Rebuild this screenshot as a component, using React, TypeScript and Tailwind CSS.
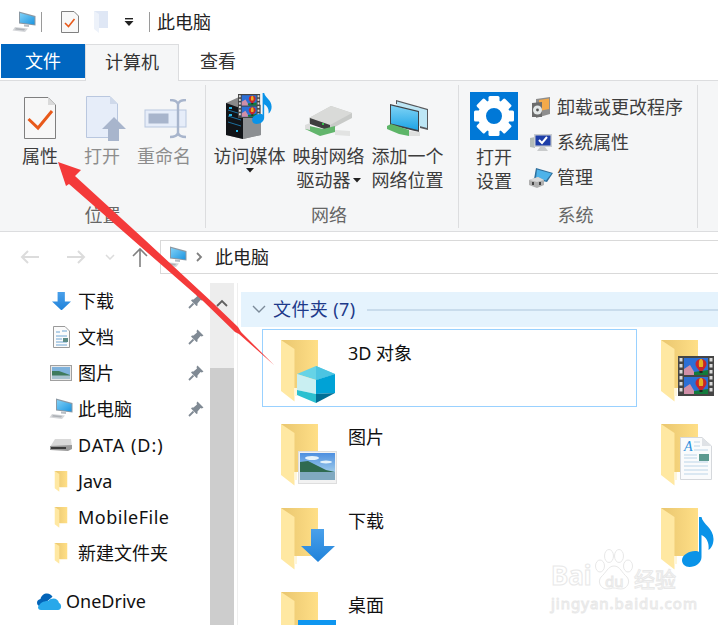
import React from "react";

const PcIcon = ({ w = 24 }: { w?: number }) => (
  <svg width={w} height={w * 0.92} viewBox="0 0 24 22" className="shrink-0">
    <defs>
      <linearGradient id="pcg" x1="0" y1="0" x2="1" y2="1">
        <stop offset="0" stopColor="#7fd0f7" />
        <stop offset="1" stopColor="#1d95e0" />
      </linearGradient>
    </defs>
    <polygon points="7,0.5 23.5,5 23.5,14.5 7,12.5" fill="#8b98a3" />
    <polygon points="8,2 22.5,6 22.5,13.5 8,11.5" fill="url(#pcg)" />
    <polygon points="12,13.5 17,14 17,16 12,15.5" fill="#b9bec4" />
    <polygon points="3,16 16,17.5 13,21 0.5,19.5" fill="#d4d6d9" />
    <polygon points="4,17 13,18 12,19.5 3,18.5" fill="#aeb2b7" />
  </svg>
);

const Folder = ({ w = 37, h = 62 }: { w?: number; h?: number }) => (
  <svg width={w} height={h} viewBox="0 0 37 62" className="shrink-0">
    <defs>
      <linearGradient id="fback" x1="0" y1="0" x2="1" y2="0">
        <stop offset="0" stopColor="#e9c66f" />
        <stop offset="1" stopColor="#ffdf87" />
      </linearGradient>
    </defs>
    <polygon points="0,0 37,0 37,48 10,48" fill="url(#fback)" />
    <polygon points="0,0 13.5,9 13.5,61.5 0,51" fill="#ffe8a2" />
    <polygon points="13.5,48 16,48 16,56 13.5,56" fill="#fff6da" />
  </svg>
);

const Cube = () => (
  <svg width="39" height="38" viewBox="0 0 39 38">
    <polygon points="19,0 38,8 19,14 0,8" fill="#66d3e6" />
    <polygon points="19,0 38,8 19,14" fill="#4cc4e2" />
    <polygon points="0,8 19,14 19,28 0,24" fill="#c9eff2" />
    <polygon points="38,8 38,27 19,28 19,14" fill="#00a2d6" />
    <polygon points="0,24 19,28 19,37 0,29" fill="#2bc0d0" />
    <polygon points="19,28 38,27 19,37" fill="#006f95" />
  </svg>
);

const PhotoBadge = () => (
  <svg width="39" height="33" viewBox="0 0 39 33">
    <defs>
      <linearGradient id="sky" x1="0" y1="0" x2="0" y2="1">
        <stop offset="0" stopColor="#4d8fe0" />
        <stop offset="1" stopColor="#bfe3ee" />
      </linearGradient>
    </defs>
    <rect x="0.5" y="0.5" width="38" height="32" fill="#f2f2f2" stroke="#dedede" />
    <rect x="2" y="2" width="35" height="27" fill="url(#sky)" />
    <ellipse cx="14" cy="7" rx="7" ry="2" fill="#e6f3fa" />
    <ellipse cx="28" cy="11" rx="6" ry="1.500" fill="#e6f3fa" />
    <polygon points="2,11 10,10 20,15 28,19 37,21 37,22 2,22" fill="#2f6a50" />
    <rect x="2" y="21" width="35" height="8" fill="#80a9c0" />
  </svg>
);

const DownArrow = ({ w = 34 }: { w?: number }) => (
  <svg width={w} height={w * 0.97} viewBox="0 0 34 33">
    <defs>
      <linearGradient id="dl" x1="0" y1="0" x2="0" y2="1">
        <stop offset="0" stopColor="#4aa0ea" />
        <stop offset="1" stopColor="#1f82da" />
      </linearGradient>
    </defs>
    <polygon points="10,0 23,0 23,17 34,17 17,33 0,17 10,17" fill="url(#dl)" />
  </svg>
);

const DesktopBadge = () => <div className="w-[38px] h-[20px] bg-[#0f96f0]" />;

const Film = () => (
  <svg width="36" height="40" viewBox="0 0 36 40">
    <rect width="36" height="40" fill="#454545" />
    {[2, 8, 14, 20, 26, 32].map((y) => (
      <g key={y}>
        <rect x="1.5" y={y} width="3" height="3.5" fill="#d9d9d9" />
        <rect x="31.5" y={y} width="3" height="3.5" fill="#d9d9d9" />
      </g>
    ))}
    {[2, 21].map((y) => (
      <g key={y}>
        <rect x="6" y={y} width="24" height="17" fill="#2c6fd6" />
        <polygon points={`6,${y + 11} 12,${y + 7} 18,${y + 17} 6,${y + 17}`} fill="#d08fa8" />
        <polygon points={`16,${y + 14} 30,${y + 12} 30,${y + 17} 16,${y + 17}`} fill="#137a3c" />
        <ellipse cx="23" cy={y + 6} rx="5.500" ry="5" fill="#c8262a" />
        <ellipse cx="23" cy={y + 6} rx="2.200" ry="5" fill="#e8b020" />
        <polygon points={`18.500,${y + 9} 27.500,${y + 9} 24.500,${y + 13} 21.500,${y + 13}`} fill="#c8262a" />
        <rect x="21.500" y={y + 13} width="3" height="2" fill="#222" />
      </g>
    ))}
  </svg>
);

const Note = ({ w = 32, h = 50 }: { w?: number; h?: number }) => (
  <svg width={w} height={h} viewBox="0 0 32 50">
    <path
      d="M17 0h2.500c1 7 12 11 12 22 0 5-2 9-5 11 1-7-2-13-7-15V40c0 6-6 10-12 10C3 50 0 47 0 43c0-5 7-9 13-9 2 0 3 0 4 1z"
      fill="#0a93e8"
    />
  </svg>
);

const DocBadge = () => (
  <svg width="32" height="43" viewBox="0 0 32 43">
    <polygon points="0.5,0.5 22,0.5 31.5,9 31.5,42.5 0.5,42.5" fill="#fafbfc" stroke="#d5d8dc" />
    <polygon points="22,0.5 31.500,9 22,9" fill="#dfe2e6" />
    <text x="4" y="14" fontSize="14" fontStyle="italic" fontFamily="Liberation Serif" fill="#2b8fdc">
      A
    </text>
    <path d="M14 5h6M14 9h6M14 13h14M4 18h13M4 21h13M4 25h24M4 29h24M4 33h24M4 37h24" stroke="#bcd5e8" strokeWidth="1" />
    <rect x="19" y="17" width="10" height="7" fill="#5d9a90" />
  </svg>
);

const Check = () => (
  <svg width="18" height="22" viewBox="0 0 18 22">
    <path d="M.5.5H13L17.5 5V21.5H.5z" fill="#f8f8f8" stroke="#808080" />
    <path d="M4 12l3.500 3.500L13.500 8" fill="none" stroke="#e8591a" strokeWidth="1.600" />
  </svg>
);

const BigCheck = () => (
  <svg width="32" height="42" viewBox="0 0 32 42">
    <path d="M.5.5H24L31.5 8V41.5H.5z" fill="#f7f7f7" stroke="#7f7f7f" />
    <path d="M24 .5V8H31.5z" fill="#dadada" />
    <path d="M4.500 22l9.500 9L28 14" fill="none" stroke="#e8591a" strokeWidth="3" />
  </svg>
);

const OpenIcon = () => (
  <svg width="42" height="46" viewBox="0 0 42 46">
    <path d="M.5.5H24L31.5 8V41.5H.5z" fill="#e6edf9" stroke="#b9c7df" />
    <path d="M24 .5V8H31.5z" fill="#cfd9ea" />
    <polygon points="28,21 40,33 33,33 33,45 22,45 22,33 16,33" fill="#a8b5cc" />
  </svg>
);

const RenameIcon = () => (
  <svg width="44" height="40" viewBox="0 0 44 40">
    <rect x="1" y="11" width="41" height="17" fill="#e6edf9" stroke="#b9c7df" />
    <rect x="4.500" y="14.500" width="20" height="10" fill="#a8b5cc" />
    <path d="M26 1c4 0 7 1 8 4v29c-1 3-4 4-8 4M42 1c-4 0-7 1-8 4M42 38c-4 0-7-1-8-4" fill="none" stroke="#a8b5cc" strokeWidth="2.400" />
  </svg>
);

const MediaIcon = () => (
  <div className="relative w-[48px] h-[46px]">
    <svg width="36" height="46" viewBox="0 0 36 46" className="absolute left-0 top-[2px]">
      <polygon points="0,8 13,2 35,10 35,40 17,44 0,40" fill="#8a8a8a" />
      <polygon points="0,8 17,14 17,44 0,40" fill="#111418" />
      <polygon points="17,14 35,10 35,40 17,44" fill="#8c8f92" />
      <path d="M2 15l13 4M2 21l13 4M2 27l13 4" stroke="#1d6f9e" />
      <rect x="3" y="12" width="3" height="2" fill="#27b6e8" />
      <rect x="3" y="19" width="3" height="2" fill="#27b6e8" />
      <rect x="10" y="35" width="2" height="2" fill="#27b6e8" />
    </svg>
    <div className="absolute left-[12px] top-[1px] scale-x-[0.62] scale-y-[0.6] origin-top-left">
      <Film />
    </div>
    <div className="absolute left-[26px] top-0">
      <Note w={20} h={31} />
    </div>
  </div>
);

const DriveIcon = () => (
  <svg width="48" height="32" viewBox="0 0 48 32">
    <polygon points="4,14 26,2 47,9 47,14 24,26 4,19" fill="#c8cac8" />
    <polygon points="4,14 25,21 47,9 26,2" fill="#d9dad8" />
    <polygon points="5,14 25,21 25,27 5,20" fill="#3e3f3f" />
    <rect x="17" y="19" width="2" height="2" fill="#35c24c" />
    <polygon points="0,21 18,25 30,22 30,28 15,32 0,25" fill="#62b56c" />
    <polygon points="30,26 45,27 45,32 30,31" fill="#e2e3e2" />
    <polygon points="0,21 5,19 5,26 0,25" fill="#dcdddc" />
  </svg>
);

const AddNetIcon = () => (
  <svg width="42" height="36" viewBox="0 0 42 36">
    <defs>
      <linearGradient id="scr" x1="0" y1="0" x2="0" y2="1">
        <stop offset="0" stopColor="#7fd3f5" />
        <stop offset="1" stopColor="#1ea4e6" />
      </linearGradient>
    </defs>
    <polygon points="9,0 41,9 41,30 33,28 33,8 9,4" fill="#58595c" />
    <polygon points="10,1.500 40,10 40,28 10,20" fill="#bde6f5" />
    <polygon points="3,4 32,11 32,32 3,25" fill="#3f4246" />
    <polygon points="4,5.500 31,12 31,30 4,23.500" fill="url(#scr)" />
    <polygon points="0,26 4,24 22,30 22,36 12,34 0,29" fill="#5db568" />
    <polygon points="22,31 33,32 33,36 22,36" fill="#dedfde" />
  </svg>
);

const Gear = () => (
  <svg width="48" height="48" viewBox="0 0 48 48" className="bg-[#0078d7]">
    {[0, 45, 90, 135, 180, 225, 270, 315].map((a) => (
      <rect key={a} x="18.500" y="4" width="11" height="10" rx="1.500" fill="#fff" transform={`rotate(${a} 24 24)`} />
    ))}
    <circle cx="24" cy="24" r="12" fill="none" stroke="#fff" strokeWidth="8" />
  </svg>
);

const UninstallIcon = () => (
  <svg width="20" height="21" viewBox="0 0 20 21">
    <polygon points="5,2 19,0 19,17 5,21" fill="#8e8e8e" />
    <polygon points="8,3 18,1.500 18,12 8,14" fill="#f2a94a" />
    <polygon points="1,6 11,5 11,20 1,20" fill="#6c6c6c" />
    <circle cx="6.500" cy="13" r="4.500" fill="#e4e8e8" />
    <circle cx="6.500" cy="13" r="1.400" fill="#555" />
  </svg>
);

const SysPropIcon = () => (
  <svg width="22" height="20" viewBox="0 0 22 20">
    <polygon points="0,5 5,4 5,15 0,14" fill="#b4bcb8" />
    <rect x="4" y="1" width="18" height="13" fill="#c8ccd0" />
    <rect x="5.500" y="2.500" width="15" height="10" fill="#1e3ea8" />
    <path d="M9 7l3 3 5-6" fill="none" stroke="#fff" strokeWidth="2" />
    <polygon points="10,14 15,14 18,18 7,18" fill="#c9cbcc" />
  </svg>
);

const ManageIcon = () => (
  <svg width="24" height="21" viewBox="0 0 24 21">
    <polygon points="7,1 24,6 18,15 5,12" fill="#2f6f9c" />
    <polygon points="8,2.500 22.500,6.500 17,13.500 7,11" fill="#4db3ea" />
    <polygon points="0,13 9,10 15,13 15,18 8,21 0,18" fill="#b0b0b0" />
    <polygon points="0,13 9,10 15,13 8,15" fill="#d9d9d9" />
    <rect x="3" y="15" width="2" height="3" fill="#444" />
    <rect x="10" y="15" width="2" height="3" fill="#444" />
  </svg>
);

const Caret = () => (
  <svg width="8" height="5" viewBox="0 0 8 5" className="block">
    <polygon points="0,0 8,0 4,4.500" fill="#222" />
  </svg>
);

const Pin = () => (
  <svg width="16" height="16" viewBox="0 0 16 16" className="shrink-0">
    <path d="M9.500 0.500L15.500 6.500 13.800 7.600 12.500 7 9.500 10.500 9.500 12.500 8.500 13 3 7.500 4 6.500 5.500 6.500 9 3.500 8.500 2z" fill="#808a94" />
    <path d="M5.500 10.500L1 15" stroke="#808a94" strokeWidth="1.800" />
  </svg>
);

const RibbonBtn = ({ w, icon, lines, dim, h = "h-[54px]" }: { w: string; icon: React.ReactNode; lines: React.ReactNode[]; dim?: boolean; h?: string }) => (
  <div className={`${w} flex flex-col items-center shrink-0`}>
    <div className={`${h} w-full flex items-end justify-center`}>{icon}</div>
    <div className={`mt-[5px] flex flex-col items-center text-[18px] leading-[24px] whitespace-nowrap ${dim ? "text-[#8d8d8d]" : "text-[#3d3d3d]"}`}>
      {lines.map((l, i) => (
        <div key={i} className="flex items-center">
          {l}
        </div>
      ))}
    </div>
  </div>
);

const Group = ({ w, label, children, pl, labelClass }: { w: string; label: string; children: React.ReactNode; pl: string; labelClass?: string }) => (
  <div className={`${w} shrink-0 h-[143px] border-r border-[#dcdddf] flex flex-col`}>
    <div className={`flex ${pl} flex-1 min-h-0`}>{children}</div>
    <div className={`h-[24px] mb-[1px] text-center text-[18px] leading-[24px] text-[#666] ${labelClass ?? ""}`}>{label}</div>
  </div>
);

const SideRow = ({ icon, text, pin, textClass }: { icon: React.ReactNode; text: string; pin?: boolean; textClass?: string }) => (
  <div className="h-[36px] flex items-center pl-[49px] pr-[6px]">
    <div className="w-[24px] flex justify-center shrink-0">{icon}</div>
    <span className={`ml-[5px] flex-1 text-[18px] text-[#111] whitespace-nowrap ${textClass ?? ""}`}>{text}</span>
    {pin && <Pin />}
  </div>
);

const FileItem = ({ badge, name, selected, badgeClass }: { badge: React.ReactNode; name?: string; selected?: boolean; badgeClass: string }) => (
  <div className={`h-[78px] flex items-start pl-[18px] ${selected ? "border border-[#99d1ff]" : "border border-transparent"}`}>
    <div className="relative w-[55px] h-[62px] mt-[10px] shrink-0">
      <Folder />
      <div className={`absolute ${badgeClass}`}>{badge}</div>
    </div>
    {name && <div className="ml-[12px] mt-[9px] text-[18px] leading-[28px] text-[#111]">{name}</div>}
  </div>
);

export default function App() {
  return (
    <div
      className="relative w-[718px] h-[625px] overflow-hidden bg-white"
      style={{ fontFamily: '"Noto Sans", "Noto Sans CJK SC", sans-serif' }}
    >
      {/* title bar */}
      <div className="h-[44px] flex items-center pl-[12px]">
        <PcIcon />
        <div className="w-px h-[20px] bg-[#9a9a9a] ml-[5px]" />
        <div className="ml-[19px]">
          <Check />
        </div>
        <svg width="15" height="22" viewBox="0 0 15 22" className="ml-[15px]">
          <polygon points="0,0 14,0 14,17 4,17" fill="#dfe7f5" />
          <polygon points="0,0 5,3 5,22 0,18" fill="#edf2fa" />
        </svg>
        <svg width="10" height="9" viewBox="0 0 10 9" className="ml-[15px]">
          <rect x="1" y="0" width="8" height="1.400" fill="#222" />
          <polygon points="0.500,3 9.500,3 5,8" fill="#222" />
        </svg>
        <div className="w-px h-[20px] bg-[#9a9a9a] ml-[15px]" />
        <span className="ml-[7px] text-[18px] text-[#222]">此电脑</span>
      </div>

      {/* tabs */}
      <div className="h-[37px] flex pl-[1px] border-b border-[#dcdddf] relative">
        <div className="w-[84px] h-[34px] bg-[#0066c0] text-white text-[18px] leading-[34px] text-center">文件</div>
        <div className="w-[94px] h-[37px] bg-[#f5f6f7] border-x border-t border-[#dcdddf] text-[18px] leading-[34px] text-center text-[#333] z-10">
          计算机
        </div>
        <div className="ml-[21px] text-[18px] leading-[34px] text-[#333]">查看</div>
      </div>

      {/* ribbon */}
      <div className="h-[151px] bg-[#f5f6f7] border-b border-[#dcdddf] flex pt-[4px]">
        <Group w="w-[206px]" pl="pl-[9px]" label="位置">
          <RibbonBtn w="w-[62px]" icon={<BigCheck />} lines={["属性"]} />
          <RibbonBtn w="w-[62px]" icon={<div className="pl-[10px] -mb-[3px]"><OpenIcon /></div>} lines={["打开"]} dim />
          <RibbonBtn w="w-[62px]" icon={<div className="pl-[3px]"><RenameIcon /></div>} lines={["重命名"]} dim />
        </Group>
        <Group w="w-[253px]" pl="pl-[4px]" label="网络" labelClass="pr-[6px]">
          <RibbonBtn w="w-[79px]" icon={<MediaIcon />} lines={["访问媒体", <Caret />]} />
          <RibbonBtn
            w="w-[79px]"
            icon={<div className="mb-[3px]"><DriveIcon /></div>}
            lines={["映射网络", <>驱动器<span className="ml-[2px]"><Caret /></span></>]}
          />
          <RibbonBtn w="w-[79px]" icon={<div className="mb-[3px]"><AddNetIcon /></div>} lines={["添加一个", "网络位置"]} />
        </Group>
        <Group w="w-[239px]" pl="pl-[11px]" label="系统" labelClass="pr-[5px]">
          <RibbonBtn w="w-[48px]" icon={<Gear />} lines={["打开", "设置"]} h="h-[55px]" />
          <div className="ml-[11px] mt-[5px] flex flex-col text-[18px] text-[#3d3d3d]">
            {[
              [<UninstallIcon />, "卸载或更改程序"],
              [<SysPropIcon />, "系统属性"],
              [<ManageIcon />, "管理"],
            ].map(([ic, t], i) => (
              <div key={i} className="h-[35px] flex items-center whitespace-nowrap">
                <div className="w-[24px] flex justify-center shrink-0">{ic}</div>
                <span className="ml-[4px]">{t}</span>
              </div>
            ))}
          </div>
        </Group>
      </div>

      {/* address row */}
      <div className="mt-[8px] h-[34px] flex items-center">
        <div className="w-[160px] h-full flex items-center pl-[20px] shrink-0">
          <svg width="20" height="16" viewBox="0 0 20 16"><path d="M19 8H2M8 2L2 8l6 6" fill="none" stroke="#dcdcdc" strokeWidth="2" /></svg>
          <svg width="20" height="16" viewBox="0 0 20 16" className="ml-[26px]"><path d="M1 8h17M12 2l6 6-6 6" fill="none" stroke="#dcdcdc" strokeWidth="2" /></svg>
          <svg width="10" height="6" viewBox="0 0 10 6" className="ml-[19px]"><path d="M1 1l4 4 4-4" fill="none" stroke="#dcdcdc" strokeWidth="1.500" /></svg>
          <svg width="16" height="20" viewBox="0 0 16 20" className="ml-[17px]"><path d="M8 20V2M1 9l7-7 7 7" fill="none" stroke="#808080" strokeWidth="1.600" /></svg>
        </div>
        <div className="flex-1 h-full border border-r-0 border-[#d9d9d9] flex items-center pl-[2px]">
          <PcIcon />
          <svg width="8" height="10" viewBox="0 0 8 10" className="ml-[8px]"><path d="M2 1l4 4-4 4" fill="none" stroke="#808080" strokeWidth="1.800" /></svg>
          <span className="ml-[12px] text-[18px] text-[#222]">此电脑</span>
        </div>
      </div>

      {/* body */}
      <div className="mt-[9px] flex h-[400px]">
        <div className="w-[210px] shrink-0 overflow-hidden">
          <SideRow icon={<DownArrow w={19} />} text="下载" pin />
          <SideRow
            icon={
              <svg width="17" height="22" viewBox="0 0 17 22">
                <path d="M.5.5H12L16.500 5V21.500H.5z" fill="#fbfbfb" stroke="#9a9a9a" />
                <path d="M3 6h4M9 5h5M3 10h11M3 13h6M3 16h11M3 19h11" stroke="#6fa6d4" />
                <rect x="10" y="12" width="5" height="4" fill="#5d8b85" />
              </svg>
            }
            text="文档"
            pin
          />
          <SideRow
            icon={
              <svg width="22" height="16" viewBox="0 0 22 16">
                <rect x=".5" y=".5" width="21" height="15" fill="#e8e8e8" stroke="#a0a0a0" />
                <rect x="2" y="2" width="18" height="12" fill="#7fb2dc" />
                <polygon points="2,6 9,6 20,10 20,11 2,11" fill="#3f7a5c" />
                <rect x="2" y="10.500" width="18" height="3.500" fill="#a8c2cf" />
              </svg>
            }
            text="图片"
            pin
          />
          <SideRow icon={<PcIcon />} text="此电脑" pin />
          <SideRow
            icon={
              <svg width="22" height="12" viewBox="0 0 22 12">
                <polygon points="5,0 21,0 22,8 0,8" fill="#d9d9d9" />
                <polygon points="0,7 22,6 22,10 18,12 0,11" fill="#9a9a9a" />
                <rect x="1" y="8" width="15" height="2" fill="#3a3a3a" />
              </svg>
            }
            text="DATA (D:)"
            textClass="tracking-[1px]"
          />
          <SideRow icon={<Folder w={14} h={21} />} text="Java" />
          <SideRow icon={<Folder w={14} h={21} />} text="MobileFile" textClass="tracking-[0.5px]" />
          <SideRow icon={<Folder w={14} h={21} />} text="新建文件夹" />
          <div className="mt-[12px] h-[36px] flex items-center pl-[37px]">
            <svg width="25" height="17" viewBox="0 0 25 17">
              <path d="M4 15.500C1.500 15.500 0 13.800 0 11.800c0-2 1.500-3.500 3.500-3.700C4.200 4.500 7 2.500 10 2.500c2.500 0 4.500 1.300 5.500 3.300" fill="#0364b8" transform="translate(0 -2)" />
              <path d="M4 17c-2 0-3-1-3-3 2-4 5-6 10-6 4-4 10-3 11 2 3 1 3 7-1 7z" fill="#28a8ea" />
            </svg>
            <span className="ml-[4px] text-[18px] text-[#111]">OneDrive</span>
          </div>
        </div>

        {/* scrollbar */}
        <div className="w-[24px] shrink-0 bg-[#ededed] flex flex-col">
          <div className="h-[85px] shrink-0 flex justify-center pt-[16px]">
            <svg width="12" height="8" viewBox="0 0 12 8"><path d="M1 7l5-5 5 5" fill="none" stroke="#606060" strokeWidth="1.800" /></svg>
          </div>
          <div className="flex-1 bg-[#cdcdcd]" />
        </div>
        <div className="w-[3px] shrink-0" />
        <div className="w-px shrink-0 bg-[#efefef]" />

        {/* main */}
        <div className="flex-1 min-w-0 overflow-hidden pt-[9px] pl-[3px]">
          <div className="h-[35px] bg-[#e5f3fd] flex items-center pl-[11px]">
            <svg width="14" height="9" viewBox="0 0 14 9"><path d="M1 1l6 6 6-6" fill="none" stroke="#7b8a99" strokeWidth="1.400" /></svg>
            <span className="ml-[7px] text-[18px] text-[#1e3a8a] whitespace-nowrap tracking-[0.4px]">文件夹 (7)</span>
            <div className="ml-[11px] flex-1 h-[2px] bg-[#c9dcec]" />
          </div>
          <div className="mt-[2px] ml-[21px] grid grid-cols-[375px_76px] gap-x-[5px] gap-y-[6px]">
            <FileItem selected name="3D 对象" badge={<Cube />} badgeClass="left-[16px] top-[26px]" />
            <FileItem badge={<Film />} badgeClass="left-[17px] top-[16px]" />
            <FileItem name="图片" badge={<PhotoBadge />} badgeClass="left-[17px] top-[27px]" />
            <FileItem badge={<DocBadge />} badgeClass="left-[19px] top-[13px]" />
            <FileItem name="下载" badge={<DownArrow />} badgeClass="left-[20px] top-[21px]" />
            <FileItem badge={<Note />} badgeClass="left-[21px] top-[9px]" />
            <FileItem name="桌面" badge={<DesktopBadge />} badgeClass="left-[17px] top-[28px]" />
          </div>
        </div>
      </div>

      {/* watermark */}
      <div className="absolute left-[551px] top-[549px] w-[130px] h-[62px] text-white [-webkit-text-stroke:1px_#e8e8e8]">
        <span className="absolute left-0 top-[15px] text-[26px] leading-[22px] font-bold whitespace-nowrap">Bai</span>
        <svg width="38" height="42" viewBox="0 0 38 42" className="absolute left-[44px] top-0">
          <g fill="#fff" stroke="#e8e8e8" strokeWidth="1">
            <ellipse cx="5" cy="17" rx="4.500" ry="6" />
            <ellipse cx="14" cy="7" rx="4.500" ry="6.500" />
            <ellipse cx="24" cy="7" rx="4.500" ry="6.500" />
            <ellipse cx="33" cy="17" rx="4.500" ry="6" />
            <path d="M19 17c6 0 8 7 13 11 4 5 0 12-6 12-3 0-5-1-7-1s-4 1-7 1c-6 0-10-7-6-12 5-4 7-11 13-11z" />
          </g>
        </svg>
        <span className="absolute left-[54px] top-[23px] text-[15px] leading-[18px] whitespace-nowrap">du</span>
        <span className="absolute left-[83px] top-[18px] text-[21px] leading-[24px] whitespace-nowrap">经验</span>
        <span className="absolute left-0 top-[46px] text-[15px] leading-[16px] tracking-[1px] whitespace-nowrap">jingyan.baidu.com</span>
      </div>

      {/* red arrow */}
      <svg className="absolute left-0 top-0 pointer-events-none" width="718" height="625" viewBox="0 0 718 625">
        <polygon points="58,162 81,170 75,176 145,240 213,303 238,327 241,332 274,365 239,334 235,332 203,301 133,240 69,184 66,186" fill="#f43a3a" />
      </svg>
    </div>
  );
}
